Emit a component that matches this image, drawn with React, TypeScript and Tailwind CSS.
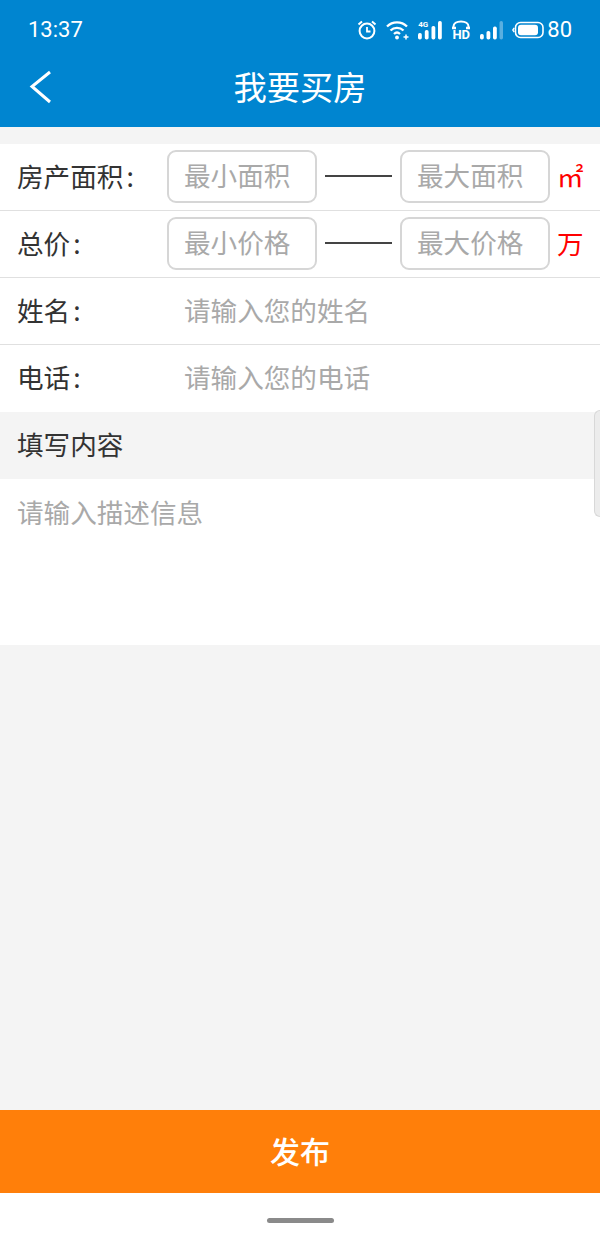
import { ReactNode } from 'react'

const cjk = "font-['Noto_Sans_CJK_SC',sans-serif]"

function StatusIcons() {
  return (
    <div className="flex items-center">
      {/* alarm */}
      <svg width="20" height="20" viewBox="0 0 20 20" fill="none" stroke="white" strokeWidth="2">
        <circle cx="10" cy="11" r="7.4" />
        <path d="M10 7v4.5h3.5" strokeWidth="1.8" />
        <path d="M1.5 4.5 5 1.5M18.5 4.5 15 1.5" />
      </svg>
      {/* wifi */}
      <svg width="23" height="20" viewBox="0 0 23 20" fill="none" stroke="white" strokeWidth="2.3" className="ml-[9px]">
        <path d="M1 6.5c5.5-5.5 14.5-5.5 20 0" />
        <path d="M4.5 10.5c3.5-3.5 9.5-3.5 13 0" />
        <path d="M8 14c1.8-1.7 4.2-1.7 6 0" />
        <circle cx="11" cy="17.5" r="1.9" fill="white" stroke="none" />
        <path d="M17.5 17h5M20 14.5v5" strokeWidth="1.5" />
      </svg>
      {/* 4G signal */}
      <div className="relative ml-[9px] h-[20px] w-[24px]">
        <span className="absolute left-0 top-[1px] text-[8px] leading-[8px] font-bold text-white font-['Roboto',sans-serif]">4G</span>
        <svg width="24" height="20" viewBox="0 0 24 20" fill="white" className="absolute left-0 top-0">
          <rect x="0" y="13" width="3.8" height="6.5" rx="1.7" />
          <rect x="6.8" y="10" width="3.8" height="9.5" rx="1.7" />
          <rect x="13.5" y="6" width="3.8" height="13.5" rx="1.7" />
          <rect x="20" y="1" width="3.8" height="18.5" rx="1.7" />
        </svg>
      </div>
      {/* HD call */}
      <div className="relative ml-[9px] h-[20px] w-[20px]">
        <svg width="20" height="10" viewBox="0 0 20 10" fill="none" stroke="white" strokeWidth="2" className="absolute left-0 top-0">
          <path d="M2.5 8V6.5C2.5 3.5 5.5 1.5 10 1.5s7.5 2 7.5 5V8" />
          <path d="M1 8h4M15 8h4" strokeWidth="2.6" />
        </svg>
        <span className="absolute left-0 top-[8px] w-[20px] text-center text-[13px] leading-[13px] font-bold text-white font-['Roboto',sans-serif]">HD</span>
      </div>
      {/* second signal */}
      <svg width="23" height="20" viewBox="0 0 23 20" fill="white" className="ml-[9px]">
        <rect x="0" y="14" width="3.8" height="5.5" rx="1.7" />
        <rect x="6.5" y="11" width="3.8" height="8.5" rx="1.7" />
        <rect x="13" y="6.5" width="3.8" height="13" rx="1.7" />
        <rect x="19.5" y="1" width="3.5" height="18.5" rx="1.7" opacity="0.35" />
      </svg>
      {/* battery */}
      <svg width="32" height="18" viewBox="0 0 32 18" fill="none" className="ml-[9px]">
        <path d="M2.2 7 0.8 9l1.4 2" stroke="white" strokeWidth="1.4" />
        <rect x="3.5" y="1.5" width="27.5" height="15" rx="5" stroke="white" strokeWidth="1.6" />
        <rect x="6" y="3.8" width="20" height="10.4" rx="3" fill="white" />
      </svg>
      <span className="ml-[3px] text-[22px] leading-none text-white font-['Roboto',sans-serif]">80</span>
    </div>
  )
}

function Label({ text }: { text: string }) {
  return (
    <>
      {text}
      <span className="ml-[3px]">:</span>
    </>
  )
}

function Box({ text }: { text: string }) {
  return (
    <div className="-mt-px flex h-[53px] w-[150px] items-center rounded-[9px] border-2 border-[#d6d6d6] pb-[2px] pl-[15px] text-[26.6px] leading-none text-[#a9a9a9]">
      {text}
    </div>
  )
}

function RangeRow({ label, min, max, unit }: { label: string; min: string; max: string; unit: ReactNode }) {
  return (
    <div className="flex h-[67px] items-center border-b border-[#e0e0e0] pl-[17px]">
      <div className="w-[150px] pb-[2px] text-[26.6px] leading-none text-[#333333]">
        <Label text={label} />
      </div>
      <Box text={min} />
      <div className="mx-[8px] -mt-[2px] h-[2px] w-[67px] bg-[#444444]" />
      <Box text={max} />
      <div className="ml-[7px] pb-[2px] text-[26.6px] leading-none text-[#ff0000]">{unit}</div>
    </div>
  )
}

function TextRow({ label, hint, last }: { label: string; hint: string; last?: boolean }) {
  return (
    <div className={`flex h-[67px] items-center pl-[17px] ${last ? '' : 'border-b border-[#e0e0e0]'}`}>
      <div className="w-[167px] pb-[2px] text-[26.6px] leading-none text-[#333333]">
        <Label text={label} />
      </div>
      <div className="pb-[2px] text-[26.6px] leading-none text-[#a9a9a9]">{hint}</div>
    </div>
  )
}

export default function App() {
  return (
    <div className={`relative flex h-[1247px] w-[600px] flex-col overflow-hidden bg-[#f4f4f4] ${cjk}`}>
      <header className="h-[127px] shrink-0 bg-[#0085d0]">
        <div className="flex h-[60px] items-center justify-between pl-[28px] pr-[28px]">
          <span className="text-[22px] leading-none text-white font-['Roboto',sans-serif]">13:37</span>
          <StatusIcons />
        </div>
        <div className="relative flex h-[57px] items-center justify-center pb-[6px]">
          <svg width="26" height="38" viewBox="0 0 26 38" fill="none" stroke="white" strokeWidth="3" className="absolute left-[28px] top-[8px]">
            <path d="M22 4 4 18.5 22 34" />
          </svg>
          <h1 className="text-[33.3px] leading-none font-normal text-white">我要买房</h1>
        </div>
      </header>

      <div className="mt-[17px] bg-white">
        <RangeRow label="房产面积" min="最小面积" max="最大面积" unit="㎡" />
        <RangeRow label="总价" min="最小价格" max="最大价格" unit="万" />
        <TextRow label="姓名" hint="请输入您的姓名" />
        <TextRow label="电话" hint="请输入您的电话" last />
      </div>

      <div className="flex h-[67px] shrink-0 items-center pb-[2px] pl-[17px] text-[26.6px] leading-none text-[#333333]">填写内容</div>

      <div className="h-[166px] shrink-0 bg-white pl-[17px] pt-[20px] text-[26.6px] leading-none text-[#a9a9a9]">请输入描述信息</div>

      <div className="flex-1" />

      <div className="flex h-[83px] shrink-0 items-center justify-center bg-[#ff7f0a] pb-[3px] text-[30px] leading-none font-medium text-white">发布</div>

      <div className="flex h-[54px] shrink-0 items-center justify-center bg-white">
        <div className="h-[5px] w-[67px] rounded-full bg-[#8a8a8a]" />
      </div>

      {/* floating edge handle */}
      <div className="absolute right-0 top-[410px] h-[107px] w-[6px] rounded-l-[6px] border border-r-0 border-[#d8d8d8] bg-[#ececec]" />
    </div>
  )
}
